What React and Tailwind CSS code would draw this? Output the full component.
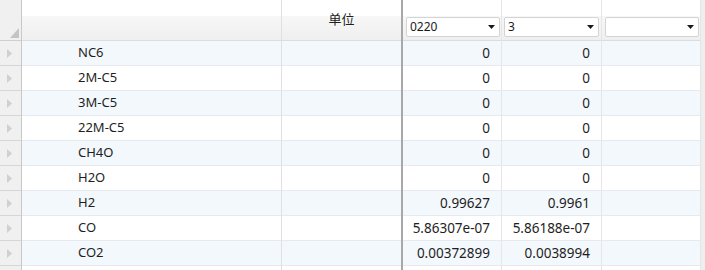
import React from "react";

const rows = [
  ["NC6", "0", "0"],
  ["2M-C5", "0", "0"],
  ["3M-C5", "0", "0"],
  ["22M-C5", "0", "0"],
  ["CH4O", "0", "0"],
  ["H2O", "0", "0"],
  ["H2", "0.99627", "0.9961"],
  ["CO", "5.86307e-07", "5.86188e-07"],
  ["CO2", "0.00372899", "0.0038994"],
  ["", "", ""],
];

function Select({ value }) {
  return (
    <div className="h-[20px] w-full bg-white border border-[#d4d4d4] rounded-[2px] flex items-center justify-between pl-[3px] pr-[4px] text-[12px] text-[#1a1a1a]">
      <span className="leading-none">{value}</span>
      <svg width="7" height="4" viewBox="0 0 7 4" className="shrink-0">
        <path d="M0 0 L7 0 L3.5 4 Z" fill="#1a1a1a" />
      </svg>
    </div>
  );
}

function HeaderBand({ children }) {
  return (
    <div className="h-[41px] shrink-0 flex flex-col border-b border-[#dcdcdc]">
      <div className="h-[16px] bg-white shrink-0" />
      <div className="flex-1 bg-gradient-to-b from-[#f7f7f7] to-[#efefef] relative">{children}</div>
    </div>
  );
}

const cellBase = "h-[25px] shrink-0 border-b border-[#e6eaee] ";
const stripe = (i) => (i % 2 === 0 ? "bg-[#f3f8fc]" : "bg-white");

export default function App() {
  return (
    <div
      className="w-[705px] h-[270px] overflow-hidden bg-white flex items-start text-[#1e1e1e]"
      style={{ fontFamily: '"Noto Sans", "Noto Sans CJK SC", sans-serif' }}
    >
      {/* row header column */}
      <div className="w-[22px] h-[270px] shrink-0 flex flex-col bg-[#f0f0f0] border-r border-[#c8c8c8]">
        <div className="h-[41px] shrink-0 border-b border-[#cfcfcf] relative">
          <svg width="9" height="10" viewBox="0 0 9 10" className="absolute right-[2px] bottom-[2px]">
            <path d="M9 0 L9 10 L0 10 Z" fill="#c4c4c4" />
          </svg>
        </div>
        {rows.map((_, i) => (
          <div key={i} className="h-[25px] shrink-0 border-b border-[#d6d6d6] flex items-center pl-[7px]">
            <svg width="5" height="9" viewBox="0 0 5 9">
              <path d="M0 0 L5 4.5 L0 9 Z" fill="#d0d0d0" />
            </svg>
          </div>
        ))}
      </div>

      {/* name column */}
      <div className="w-[260px] h-[270px] shrink-0 flex flex-col border-r border-[#e0e0e0]">
        <HeaderBand />
        {rows.map((r, i) => (
          <div key={i} className={cellBase + "flex items-center pl-[56px] text-[13px] " + stripe(i)}>
            {r[0]}
          </div>
        ))}
      </div>

      {/* unit column */}
      <div className="w-[121px] h-[270px] shrink-0 flex flex-col border-r-2 border-[#a8a8a8]">
        <HeaderBand>
          <div className="absolute left-0 right-0 -top-[6px] text-center text-[13px] leading-[18px]">单位</div>
        </HeaderBand>
        {rows.map((r, i) => (
          <div key={i} className={cellBase + stripe(i)} />
        ))}
      </div>

      {/* data column 1 */}
      <div className="w-[99px] h-[270px] shrink-0 flex flex-col border-r border-[#e6e6e6]">
        <HeaderBand>
          <div className="absolute inset-x-0 top-[1px] pl-[3px] pr-[1px]">
            <Select value="0220" />
          </div>
        </HeaderBand>
        {rows.map((r, i) => (
          <div key={i} className={cellBase + "flex items-center justify-end pr-[11px] text-[13.5px] " + stripe(i)}>
            {r[1]}
          </div>
        ))}
      </div>

      {/* data column 2 */}
      <div className="w-[100px] h-[270px] shrink-0 flex flex-col border-r border-[#e6e6e6]">
        <HeaderBand>
          <div className="absolute inset-x-0 top-[1px] pl-[2px] pr-[2px]">
            <Select value="3" />
          </div>
        </HeaderBand>
        {rows.map((r, i) => (
          <div key={i} className={cellBase + "flex items-center justify-end pr-[11px] text-[13.5px] " + stripe(i)}>
            {r[2]}
          </div>
        ))}
      </div>

      {/* data column 3 */}
      <div className="w-[99px] h-[270px] shrink-0 flex flex-col border-r border-[#e6e6e6]">
        <HeaderBand>
          <div className="absolute inset-x-0 top-[1px] pl-[3px] pr-[1px]">
            <Select value="" />
          </div>
        </HeaderBand>
        {rows.map((r, i) => (
          <div key={i} className={cellBase + stripe(i)} />
        ))}
      </div>

      {/* right strip */}
      <div className="flex-1 h-[270px] bg-[#eeeeee]" />
    </div>
  );
}
